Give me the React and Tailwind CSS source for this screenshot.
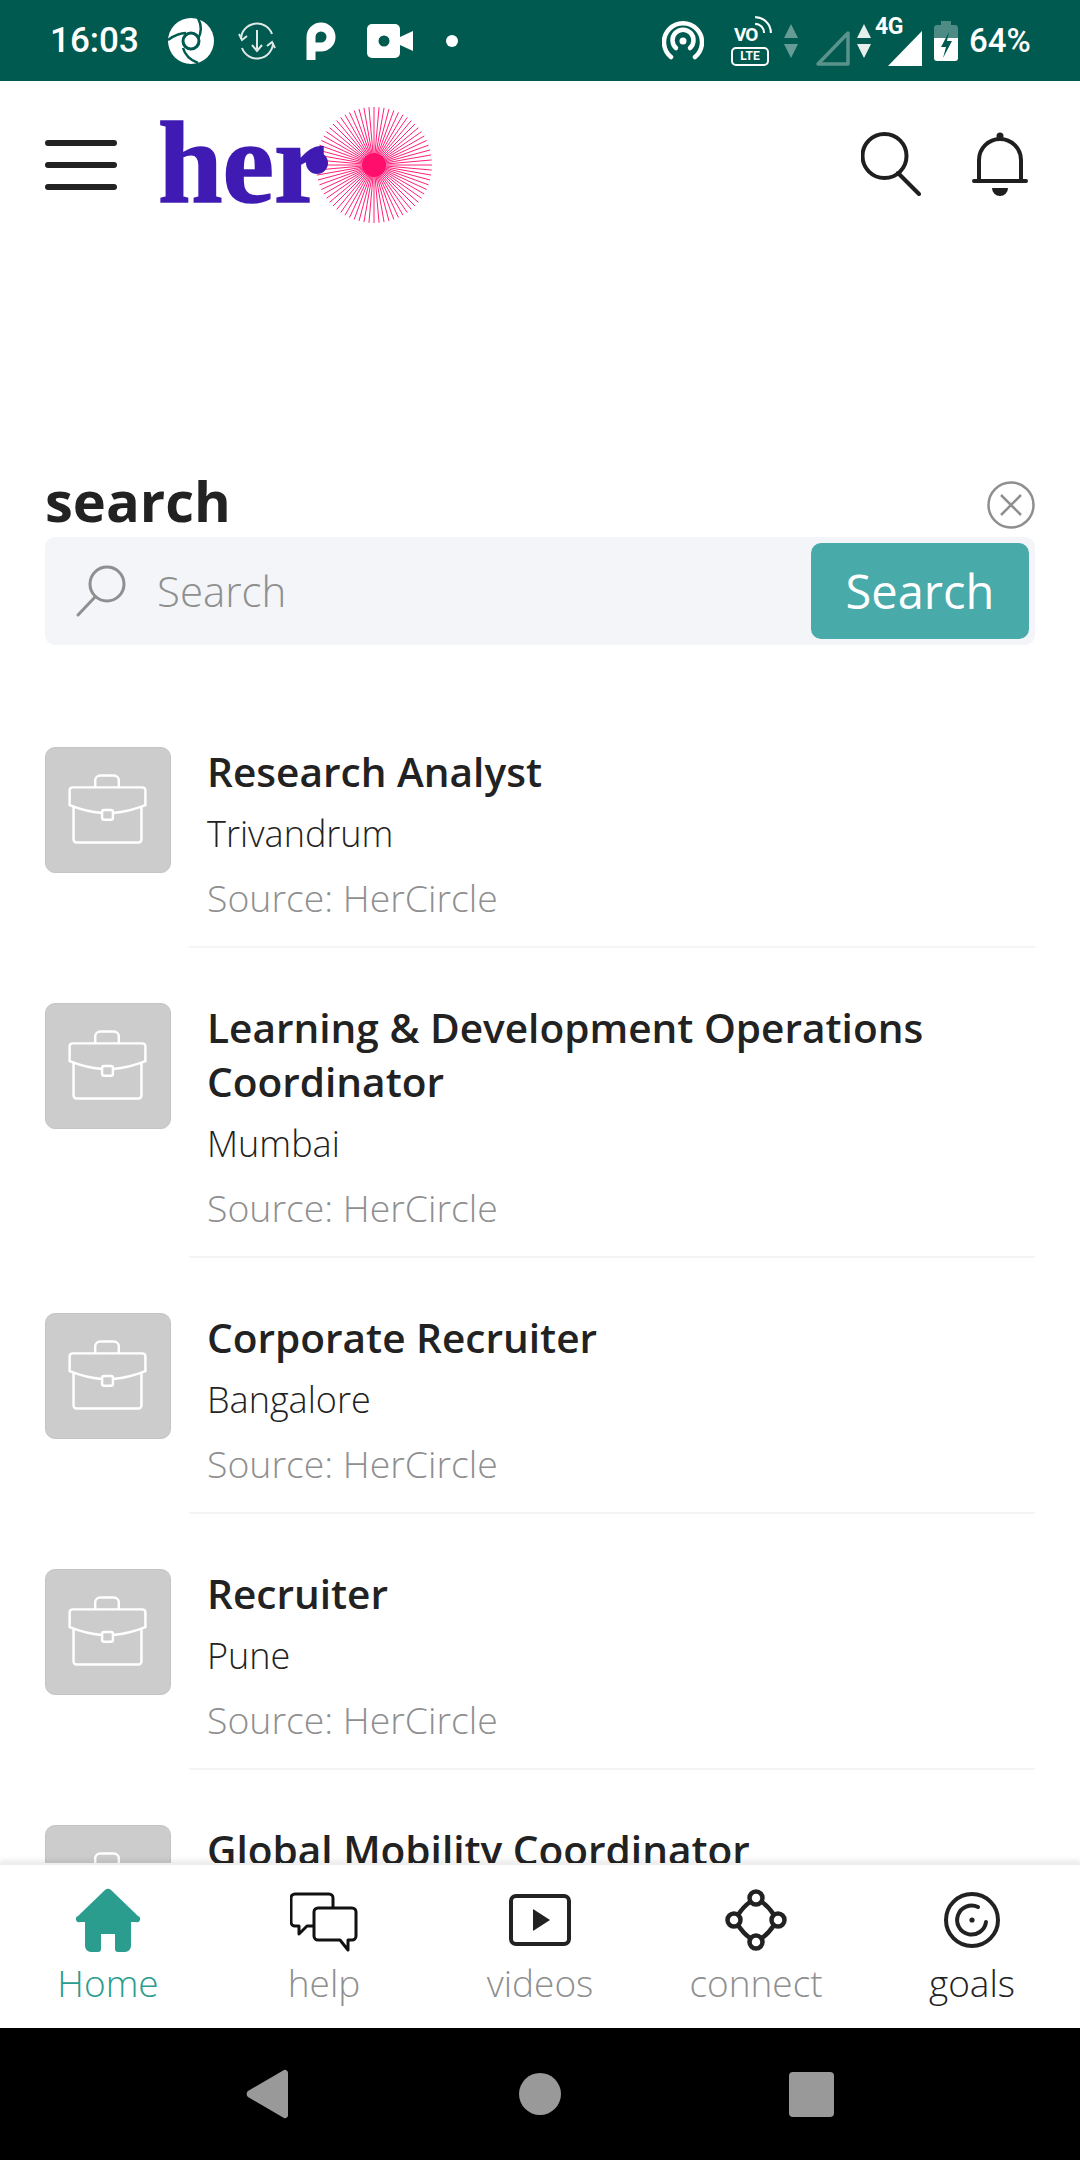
const jobs = [
  { title: ['Research Analyst'], city: 'Trivandrum' },
  { title: ['Learning & Development Operations', 'Coordinator'], city: 'Mumbai' },
  { title: ['Corporate Recruiter'], city: 'Bangalore' },
  { title: ['Recruiter'], city: 'Pune' },
  { title: ['Global Mobility Coordinator'], city: 'Delhi' }
]

function StatusBar() {
  return (
    <div className="flex h-[81px] shrink-0 items-center bg-[#005a4f] pl-[50px] font-['Roboto',sans-serif] text-white">
      <span className="w-[88px] text-[35px] font-medium leading-none">16:03</span>
      <svg viewBox="0 0 46 46" className="ml-[30px] h-[46px] w-[46px]">
        <circle cx="23" cy="23" r="23" fill="white" />
        <circle cx="23" cy="23" r="8" fill="none" stroke="#005a4f" strokeWidth="3" />
        <path d="M30 0c4 8 4 14 0 21M0 22c8-6 14-7 18-7M15 30c2 7 7 12 15 15" stroke="#005a4f" strokeWidth="2.5" fill="none" />
      </svg>
      <svg viewBox="0 0 38 38" fill="none" stroke="#dfe9e6" strokeWidth="2" className="ml-[24px] h-[38px] w-[38px]">
        <path d="M3 17a16 16 0 0 1 31-5M35 21a16 16 0 0 1-31 5" />
        <path d="M1 12l3 6 5-4M37 26l-3-6-5 4" />
        <path d="M19 8v19M14 23l5 6 5-6" />
      </svg>
      <svg viewBox="0 0 30 38" fill="none" stroke="white" strokeWidth="9" className="ml-[30px] h-[38px] w-[30px]">
        <path d="M5 38V15a10 10 0 1 1 10 10H8" />
      </svg>
      <svg viewBox="0 0 46 36" className="ml-[31px] h-[36px] w-[46px]">
        <rect x="0" y="1" width="33" height="34" rx="5" fill="white" />
        <circle cx="17" cy="18" r="5.5" fill="#005a4f" />
        <path d="M33 14l13-6v20l-13-6z" fill="white" />
      </svg>
      <span className="ml-[33px] h-[12px] w-[12px] rounded-full bg-white" />
      <svg viewBox="0 0 42 42" fill="none" stroke="white" strokeWidth="4.5" strokeLinecap="round" className="ml-[204px] h-[42px] w-[42px]">
        <path d="M9 37a19 19 0 1 1 24 0" />
        <path d="M14 28a10.5 10.5 0 1 1 14 0" />
        <circle cx="21" cy="21" r="3.5" fill="white" stroke="none" />
      </svg>
      <div className="relative ml-[27px] h-[50px] w-[40px]">
        <span className="absolute left-[3px] top-[9px] text-[19px] font-bold leading-none tracking-[-1px]">VO</span>
        <svg viewBox="0 0 16 16" fill="none" stroke="white" strokeWidth="1.8" className="absolute right-[-1px] top-0 h-[18px] w-[18px]">
          <path d="M1 7a8 8 0 0 1 8 8M1 1a14 14 0 0 1 14 14" />
        </svg>
        <span className="absolute bottom-0 left-0 flex h-[19px] w-[38px] items-center justify-center rounded-[5px] border-2 border-white text-[12px] font-bold leading-none">
          LTE
        </span>
      </div>
      <Arrows className="ml-[13px] opacity-40" />
      <svg viewBox="0 0 36 36" fill="none" stroke="white" strokeOpacity="0.35" strokeWidth="3.5" strokeLinejoin="round" className="ml-[17px] mt-[14px] h-[36px] w-[36px]">
        <path d="M33 3v31H3z" />
      </svg>
      <Arrows className="ml-[6px] opacity-90" />
      <div className="relative ml-[4px] h-[50px] w-[48px]">
        <span className="absolute left-0 top-[-1px] text-[23px] font-bold leading-none tracking-[-0.5px]">4G</span>
        <svg viewBox="0 0 35 35" className="absolute bottom-0 right-0 h-[35px] w-[35px]">
          <path d="M34 0v35H0z" fill="white" />
        </svg>
      </div>
      <svg viewBox="0 0 24 40" className="ml-[11px] h-[40px] w-[24px]">
        <path d="M7 0h10v4h4a3 3 0 0 1 3 3v10H0V7a3 3 0 0 1 3-3h4z" fill="white" fillOpacity="0.3" />
        <path d="M0 17h24v20a3 3 0 0 1-3 3H3a3 3 0 0 1-3-3z" fill="white" />
        <path d="M15 11l-8 15h5l-3 11 9-17h-5z" fill="#005a4f" />
      </svg>
      <span className="ml-[11px] text-[33px] font-medium leading-none">64%</span>
    </div>
  )
}

function Arrows({ className }) {
  return (
    <svg viewBox="0 0 14 34" className={`h-[34px] w-[14px] ${className}`}>
      <path d="M7 0l7 14H0zM7 34l7-14H0z" fill="white" />
    </svg>
  )
}

function Logo() {
  const rays = Array.from({ length: 72 }, (_, i) => (i * Math.PI * 2) / 72)
  return (
    <svg viewBox="0 0 280 122" className="ml-[40px] mt-[3px] h-[122px] w-[280px]">
      {rays.map((a) => (
        <line
          key={a}
          x1="217"
          y1="61"
          x2={217 + Math.cos(a) * 58}
          y2={61 + Math.sin(a) * 58}
          stroke="#ff1f78"
          strokeWidth="1"
        />
      ))}
      <circle cx="217" cy="61" r="12" fill="#ff0f6b" />
      <text
        x="1"
        y="98"
        fill="#3f1bb3"
        stroke="#3f1bb3"
        strokeWidth="1.5"
        fontSize="116"
        fontWeight="700"
        fontFamily="'Liberation Serif', serif"
      >
        her
      </text>
      <circle cx="160" cy="59" r="11" fill="#3f1bb3" />
    </svg>
  )
}

function Header() {
  return (
    <div className="flex h-[165px] shrink-0 items-center pl-[45px] pr-[52px]">
      <div className="mt-[3px] flex w-[72px] flex-col gap-[16px]">
        <span className="h-[6px] rounded-full bg-[#222]" />
        <span className="h-[6px] rounded-full bg-[#222]" />
        <span className="h-[6px] rounded-full bg-[#222]" />
      </div>
      <Logo />
      <svg viewBox="0 0 60 64" fill="none" stroke="#1f1f1f" strokeWidth="4" strokeLinecap="round" className="ml-auto h-[64px] w-[60px]">
        <circle cx="23.5" cy="24" r="22" />
        <path d="M37 41l21 21" />
      </svg>
      <svg viewBox="0 0 56 64" fill="none" stroke="#1f1f1f" strokeWidth="4" className="ml-[51px] h-[64px] w-[56px]">
        <path d="M7 49V28a21 21 0 0 1 42 0v21" />
        <path d="M2 49h52" strokeLinecap="round" />
        <circle cx="28" cy="4" r="3.5" fill="#1f1f1f" stroke="none" />
        <path d="M20 56h16a8 8 0 0 1-16 0z" fill="#1f1f1f" stroke="none" />
      </svg>
    </div>
  )
}

function SearchSection() {
  return (
    <div className="mt-[226px] px-[45px]">
      <div className="flex h-[65px] items-center justify-between">
        <h2 className="-mt-[10px] text-[56px] font-bold leading-none text-[#222]">search</h2>
        <svg viewBox="0 0 48 48" fill="none" stroke="#8f8f8f" strokeWidth="2.5" className="mr-0 mt-[1px] h-[48px] w-[48px]">
          <circle cx="24" cy="24" r="22.5" />
          <path d="M14 14l20 20M34 14L14 34" />
        </svg>
      </div>
      <div className="flex h-[108px] items-center rounded-[10px] bg-[#f3f5f9] pl-[31px] pr-[6px]">
        <svg viewBox="0 0 50 52" fill="none" stroke="#8f8f8f" strokeWidth="3" strokeLinecap="round" className="h-[52px] w-[50px]">
          <circle cx="31" cy="19" r="17" />
          <path d="M19 32L2 50" />
        </svg>
        <span className="ml-[31px] text-[42px] font-light leading-none text-[#8f8f8f]">Search</span>
        <button type="button" className="ml-auto h-[96px] w-[218px] rounded-[10px] bg-[#49aaaa] text-[47px] font-normal leading-none text-white">
          Search
        </button>
      </div>
    </div>
  )
}

function BriefcaseThumb() {
  return (
    <div className="h-[126px] w-[126px] shrink-0 rounded-[10px] border border-[#c4c4c4] bg-[#cccccc]">
      <svg viewBox="0 0 126 126" fill="none" stroke="white" strokeWidth="2.5" className="h-full w-full">
        <path d="M50 40v-7a5 5 0 0 1 5-5h14a5 5 0 0 1 5 5v7" />
        <path d="M27 40h71a3 3 0 0 1 3 3v15c-10 4-21 7-33 8M57 66c-12-1-23-4-33-8V43a3 3 0 0 1 3-3" />
        <path d="M28 60v33a3 3 0 0 0 3 3h63a3 3 0 0 0 3-3V60" />
        <rect x="57" y="63" width="11" height="10" rx="2" />
      </svg>
    </div>
  )
}

function JobRow({ job }) {
  return (
    <div className="flex">
      <BriefcaseThumb />
      <div className="ml-[18px] -mt-[2px] flex-1 border-b-2 border-[#f4f4f4] pb-[21px] pl-[18px]">
        {job.title.map((line) => (
          <div key={line} className="text-[40.6px] font-semibold leading-[54px] text-[#222]">
            {line}
          </div>
        ))}
        <div className="mt-[8px] text-[36px] font-light leading-[54px] text-[#222]">{job.city}</div>
        <div className="mt-[10px] text-[37.4px] font-light leading-[54px] text-[#8f8f8f]">Source: HerCircle</div>
      </div>
    </div>
  )
}

function HomeIcon() {
  return (
    <svg viewBox="0 0 64 64" className="h-[64px] w-[64px]">
      <path
        d="M29 2a4 4 0 0 1 6 0l27 26a3 3 0 0 1-2 6h-5v24a6 6 0 0 1-6 6h-7a3 3 0 0 1-3-3V46H25v15a3 3 0 0 1-3 3h-7a6 6 0 0 1-6-6V34H4a3 3 0 0 1-2-6z"
        fill="#2a9d8f"
      />
    </svg>
  )
}

function HelpIcon() {
  return (
    <svg viewBox="0 0 68 64" fill="none" stroke="#111" strokeWidth="3" strokeLinejoin="round" className="h-[64px] w-[68px]">
      <path d="M43 20V10a4 4 0 0 0-4-4H5a4 4 0 0 0-4 4v24a4 4 0 0 0 4 4h4v8l8-8h7" />
      <path d="M28 20h34a4 4 0 0 1 4 4v24a4 4 0 0 1-4 4h-4v10l-8-10H28a4 4 0 0 1-4-4V24a4 4 0 0 1 4-4z" />
    </svg>
  )
}

function VideoIcon() {
  return (
    <svg viewBox="0 0 64 64" fill="none" stroke="#222" strokeWidth="4" className="h-[64px] w-[64px]">
      <rect x="3" y="8" width="58" height="48" rx="5" />
      <path d="M25 21l17 11-17 11z" fill="#222" stroke="none" />
    </svg>
  )
}

function ConnectIcon() {
  return (
    <svg viewBox="0 0 64 64" fill="none" stroke="#222" strokeWidth="4.5" className="h-[64px] w-[64px]">
      <circle cx="32" cy="10" r="6.5" />
      <circle cx="32" cy="54" r="6.5" />
      <circle cx="10" cy="32" r="6.5" />
      <circle cx="54" cy="32" r="6.5" />
      <path d="M38 14q7 5 12 13M50 37q-5 8-12 13M26 50q-7-5-12-13M14 27q5-8 12-13" />
    </svg>
  )
}

function GoalsIcon() {
  return (
    <svg viewBox="0 0 64 64" fill="none" stroke="#222" strokeWidth="4" className="h-[64px] w-[64px]">
      <circle cx="32" cy="32" r="26" />
      <path d="M38 19a14.5 14.5 0 1 0 8 15" strokeLinecap="round" />
      <circle cx="32" cy="32" r="2.6" fill="#222" stroke="none" />
    </svg>
  )
}

const navItems = [
  { label: 'Home', Icon: HomeIcon, color: 'text-[#2a9d8f]' },
  { label: 'help', Icon: HelpIcon, color: 'text-[#8f8f8f]' },
  { label: 'videos', Icon: VideoIcon, color: 'text-[#8f8f8f]' },
  { label: 'connect', Icon: ConnectIcon, color: 'text-[#8f8f8f]' },
  { label: 'goals', Icon: GoalsIcon, color: 'text-[#222]' }
]

function BottomNav() {
  return (
    <div className="z-10 grid h-[165px] shrink-0 grid-cols-5 border-t-2 border-[#eeeeee] bg-white pt-[23px] shadow-[0_-3px_5px_rgba(0,0,0,0.08)]">
      {navItems.map(({ label, Icon, color }) => (
        <div key={label} className="flex flex-col items-center">
          <Icon />
          <span className={`mt-[9px] text-[37px] font-light leading-[44px] ${color}`}>{label}</span>
        </div>
      ))}
    </div>
  )
}

function SystemBar() {
  return (
    <div className="grid h-[132px] shrink-0 grid-cols-3 items-center bg-black px-[246px]">
      <svg viewBox="0 0 42 50" className="h-[50px] w-[42px] justify-self-start">
        <path d="M38 1a3 3 0 0 1 4 3v42a3 3 0 0 1-4 3L2 28a4 4 0 0 1 0-6z" fill="#999" />
      </svg>
      <span className="h-[42px] w-[42px] justify-self-center rounded-full bg-[#999]" />
      <span className="h-[45px] w-[45px] justify-self-end rounded-[4px] bg-[#999]" />
    </div>
  )
}

export default function App() {
  return (
    <div className="flex h-[2160px] w-[1080px] flex-col overflow-hidden bg-white font-['Open_Sans',sans-serif]">
      <StatusBar />
      <div className="min-h-0 flex-1 overflow-hidden">
        <Header />
        <SearchSection />
        <div className="mt-[102px] flex flex-col gap-[55px] px-[45px]">
          {jobs.map((job) => (
            <JobRow key={job.title[0]} job={job} />
          ))}
        </div>
      </div>
      <BottomNav />
      <SystemBar />
    </div>
  )
}
